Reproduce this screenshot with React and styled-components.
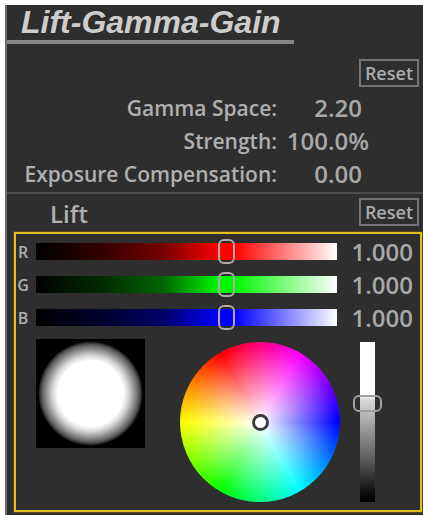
import React, { useState } from 'react';
import styled, { createGlobalStyle } from 'styled-components';

const GlobalStyle = createGlobalStyle`
  * {
    box-sizing: border-box;
  }

  html {
    background: #ffffff;
  }

  body {
    margin: 0;
    font-family: 'Open Sans', 'Noto Sans', sans-serif;
    color: #b0b0b0;
  }
`;

const Page = styled.main`
  display: flex;
  min-height: 100vh;
  padding: 5px 0 0 5px;
`;

const Panel = styled.section`
  flex: 1;
  min-width: 0;
  background: #2e2e2e;
  border-left: 2px solid #6c6c6c;
`;

const Title = styled.h1`
  width: 69%;
  margin: 0;
  padding-left: 14px;
  border-bottom: 4px solid #868686;
  font-family: 'Liberation Sans', Arial, sans-serif;
  font-size: 32px;
  font-weight: 700;
  font-style: italic;
  line-height: 35px;
  white-space: nowrap;
  color: #cdcdcd;
`;

const Toolbar = styled.div`
  display: flex;
  align-items: center;
  justify-content: space-between;
  padding: 0 4px 0 43px;
`;

const MainToolbar = styled(Toolbar)`
  margin-top: 15px;
`;

const ResetButton = styled.button`
  height: 28px;
  margin-left: auto;
  padding: 0 4px;
  background: transparent;
  border: 2px solid #747474;
  font-family: inherit;
  font-size: 18px;
  font-weight: 600;
  line-height: 24px;
  color: #acacac;
  cursor: pointer;
`;

const Params = styled.div`
  display: grid;
  grid-template-columns: 270px 92px;
  grid-auto-rows: 33px;
  align-items: center;
  margin-top: 4px;
  padding-bottom: 2px;
`;

const ParamLabel = styled.label`
  text-align: right;
  font-size: 21px;
  font-weight: 600;
  white-space: nowrap;
`;

const NumberField = styled.input`
  min-width: 0;
  padding: 0;
  background: transparent;
  border: none;
  outline: none;
  font-family: inherit;
  font-size: 24px;
  font-weight: 600;
  line-height: 33px;
  text-align: right;
  color: #a8a8a8;
`;

const ParamField = styled(NumberField)`
  padding-right: ${({ $percent }) => ($percent ? 0 : 7)}px;
`;

const Group = styled.section`
  padding-top: 4px;
  border-top: 2px solid #4c4c4c;
`;

const GroupTitle = styled.h2`
  margin: 0;
  padding-top: 4px;
  font-size: 24px;
  font-weight: 600;
  line-height: 24px;
`;

const ColorBox = styled.div`
  margin: 6px 1px 3px 7px;
  border: 2px solid #e2be20;
  box-shadow: 0 0 0 1px #54451a;
  padding: 1px 7px 8px 0;
`;

const ChannelRow = styled.div`
  display: flex;
  align-items: center;
  height: 33px;
`;

const ChannelLabel = styled.label`
  width: 14px;
  margin-right: 6px;
  text-align: center;
  font-size: 16px;
  font-weight: 600;
`;

const ChannelField = styled(NumberField)`
  width: 76px;
`;

const ChannelSlider = styled.input`
  flex: 1;
  min-width: 0;
  height: 25px;
  margin: 0;
  appearance: none;
  background: linear-gradient(
      to right,
      #000000,
      ${({ $colors }) => $colors[0]} 22%,
      ${({ $colors }) => $colors[1]} 42%,
      ${({ $colors }) => $colors[2]} 61%,
      ${({ $colors }) => $colors[2]} 66%,
      #ffffff
    )
    center / 100% 17px no-repeat;

  &::-webkit-slider-thumb {
    appearance: none;
    width: 17px;
    height: 25px;
    background: transparent;
    border: 2px solid #b4a8a8;
    border-radius: 6px;
  }
`;

const Pickers = styled.div`
  display: flex;
  align-items: flex-start;
  padding: 5px 0 0 20px;
`;

const Falloff = styled.div`
  width: 109px;
  height: 109px;
  background: radial-gradient(
    closest-side,
    #ffffff 60%,
    #d4d4d4 70%,
    #9c9c9c 79%,
    #5c5c5c 89%,
    #303030 93%,
    #000000 96%
  );
`;

const Wheel = styled.div`
  display: grid;
  place-items: center;
  width: 160px;
  height: 160px;
  margin: 3px 0 0 35px;
  border-radius: 50%;
  background:
    radial-gradient(closest-side, #ffffff, rgba(255, 255, 255, 0) 96%),
    conic-gradient(from -30deg, #ff0000, #ff00ff, #0000ff, #00ffff, #00ff00, #ffff00, #ff0000);
`;

const WheelHandle = styled.button`
  width: 17px;
  height: 17px;
  padding: 0;
  background: #ffffff;
  border: 3px solid #3c3c3c;
  border-radius: 50%;
  cursor: pointer;
`;

const LevelSlider = styled.input`
  writing-mode: vertical-lr;
  direction: rtl;
  width: 29px;
  height: 160px;
  margin: 3px 0 0 13px;
  appearance: none;
  background: linear-gradient(
      to bottom,
      #ffffff 33%,
      #dadada 36%,
      #a0a0a0 52%,
      #686868 70%,
      #2c2c2c 86%,
      #000000 98%
    )
    center / 15px 100% no-repeat;

  &::-webkit-slider-thumb {
    appearance: none;
    width: 29px;
    height: 17px;
    background: transparent;
    border: 2px solid #a0a0a0;
    border-radius: 6px;
  }
`;

const PARAMS = [
  { id: 'gamma', label: 'Gamma Space:', value: '2.20' },
  { id: 'strength', label: 'Strength:', value: '100.0%', percent: true },
  { id: 'exposure', label: 'Exposure Compensation:', value: '0.00' },
];

const CHANNELS = [
  { name: 'R', colors: ['#340000', '#740000', '#ff0000'] },
  { name: 'G', colors: ['#002c00', '#006400', '#00f800'] },
  { name: 'B', colors: ['#00002c', '#000068', '#0000ff'] },
];

const Channel = ({ name, colors }) => {
  const [value, setValue] = useState(1);

  return (
    <ChannelRow>
      <ChannelLabel htmlFor={`lift-${name}`}>{name}</ChannelLabel>
      <ChannelSlider
        id={`lift-${name}`}
        type="range"
        min="0"
        max="1.56"
        step="0.001"
        value={value}
        $colors={colors}
        onChange={e => setValue(Number(e.target.value))}
      />
      <ChannelField aria-label={`${name} value`} value={value.toFixed(3)} readOnly />
    </ChannelRow>
  );
};

const App = () => (
  <>
    <GlobalStyle />
    <Page>
      <Panel>
        <Title>Lift-Gamma-Gain</Title>
        <MainToolbar>
          <ResetButton type="button">Reset</ResetButton>
        </MainToolbar>
        <Params>
          {PARAMS.map(({ id, label, value, percent }) => (
            <React.Fragment key={id}>
              <ParamLabel htmlFor={id}>{label}</ParamLabel>
              <ParamField id={id} defaultValue={value} $percent={percent} />
            </React.Fragment>
          ))}
        </Params>
        <Group>
          <Toolbar>
            <GroupTitle>Lift</GroupTitle>
            <ResetButton type="button">Reset</ResetButton>
          </Toolbar>
          <ColorBox>
            {CHANNELS.map(channel => (
              <Channel key={channel.name} {...channel} />
            ))}
            <Pickers>
              <Falloff />
              <Wheel>
                <WheelHandle type="button" aria-label="Lift color" />
              </Wheel>
              <LevelSlider
                type="range"
                min="0"
                max="100"
                defaultValue="63"
                aria-label="Lift level"
              />
            </Pickers>
          </ColorBox>
        </Group>
      </Panel>
    </Page>
  </>
);

export default App;
